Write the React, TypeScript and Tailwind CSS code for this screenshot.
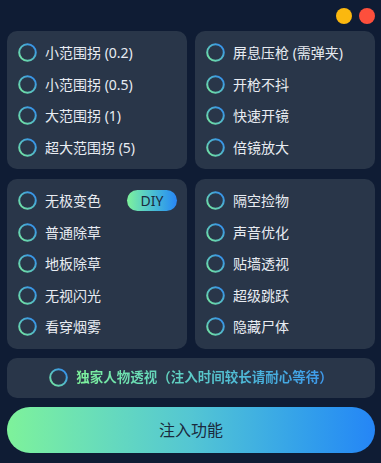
import { useId } from "react";

const FONT = { fontFamily: '"Noto Sans", "Noto Sans CJK SC", sans-serif' };

function Ring() {
  const id = useId().replace(/:/g, "");
  return (
    <svg width="19" height="19" viewBox="0 0 19 19" className="shrink-0" aria-hidden>
      <defs>
        <linearGradient id={id} x1="0" y1="1" x2="1" y2="0">
          <stop offset="0%" stopColor="#78eb9c" />
          <stop offset="100%" stopColor="#2d86f3" />
        </linearGradient>
      </defs>
      <circle cx="9.5" cy="9.5" r="8.3" fill="none" stroke={`url(#${id})`} strokeWidth="2" />
    </svg>
  );
}

function Option({ label, diy }: { label: string; diy?: boolean }) {
  return (
    <div className="flex h-[31.5px] items-center pl-[11px] pr-[10px]">
      <Ring />
      <span className="ml-[8px] text-[14px] text-[#e8ecf2]">{label}</span>
      {diy && (
        <span className="ml-auto flex h-[21px] w-[50px] items-center justify-center rounded-full bg-gradient-to-r from-[#7ef29a] to-[#2a85f5] text-[14px] text-[#1b2a3d]">
          DIY
        </span>
      )}
    </div>
  );
}

function Panel({ items, diyIndex }: { items: string[]; diyIndex?: number }) {
  return (
    <div className="rounded-[10px] bg-[#293649] py-[6px]">
      {items.map((t, i) => (
        <Option key={t} label={t} diy={i === diyIndex} />
      ))}
    </div>
  );
}

export default function App() {
  return (
    <div className="h-[463px] w-[381px] overflow-hidden bg-[#0f1c34] pl-[7px] pr-[6px]" style={FONT}>
      <div className="flex h-[31px] items-start justify-end gap-[7px] pt-[8px]">
        <span className="h-[16px] w-[16px] rounded-full bg-[#fbb80f]" />
        <span className="h-[16px] w-[16px] rounded-full bg-[#fd4f3c]" />
      </div>

      <div className="grid grid-cols-2 gap-x-[8px] gap-y-[10px]">
        <Panel items={["小范围拐 (0.2)", "小范围拐 (0.5)", "大范围拐 (1)", "超大范围拐 (5)"]} />
        <Panel items={["屏息压枪 (需弹夹)", "开枪不抖", "快速开镜", "倍镜放大"]} />
        <Panel items={["无极变色", "普通除草", "地板除草", "无视闪光", "看穿烟雾"]} diyIndex={0} />
        <Panel items={["隔空捡物", "声音优化", "贴墙透视", "超级跳跃", "隐藏尸体"]} />
      </div>

      <div className="mt-[9px] flex h-[40px] items-center justify-center rounded-[10px] bg-[#293649]">
        <Ring />
        <span className="ml-[8px] bg-gradient-to-r from-[#7ef29a] to-[#3d96ee] bg-clip-text text-[13.5px] font-bold text-transparent">
          独家人物透视（注入时间较长请耐心等待）
        </span>
      </div>

      <button className="mt-[9px] flex h-[46px] w-full items-center justify-center rounded-full bg-gradient-to-r from-[#7ef29a] via-[#54c6d3] to-[#2585f6] text-[16px] text-[#1b2a3d]">
        注入功能
      </button>
    </div>
  );
}
